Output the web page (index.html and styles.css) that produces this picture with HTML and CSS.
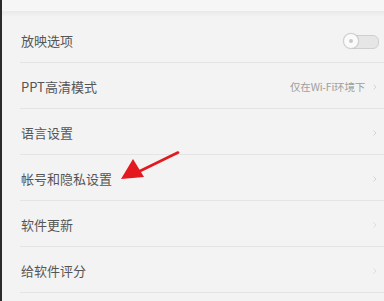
FILE: index.html
```html
<!DOCTYPE html>
<html lang="zh">
<head>
<meta charset="utf-8">
<link rel="stylesheet" href="styles.css">
</head>
<body>
<div class="screen">
  <div class="edge"></div>
  <div class="panel">
    <div class="top"></div>
    <div class="shadow"></div>
    <ul class="list">
      <li class="row">
        <span class="label">放映选项</span>
        <span class="toggle"><span class="knob"><span class="dot"></span></span></span>
      </li>
      <li class="row">
        <span class="label">PPT高清模式</span>
        <span class="value">仅在Wi-Fi环境下</span>
        <svg class="chev" width="4" height="6" viewBox="0 0 4 6"><path d="M0.5 0.5 L3 3 L0.5 5.5" fill="none" stroke="#d4d4d4" stroke-width="1"/></svg>
      </li>
      <li class="row">
        <span class="label">语言设置</span>
        <svg class="chev" width="4" height="6" viewBox="0 0 4 6"><path d="M0.5 0.5 L3 3 L0.5 5.5" fill="none" stroke="#d4d4d4" stroke-width="1"/></svg>
      </li>
      <li class="row">
        <span class="label">帐号和隐私设置</span>
        <svg class="chev" width="4" height="6" viewBox="0 0 4 6"><path d="M0.5 0.5 L3 3 L0.5 5.5" fill="none" stroke="#d4d4d4" stroke-width="1"/></svg>
      </li>
      <li class="row">
        <span class="label">软件更新</span>
        <svg class="chev" width="4" height="6" viewBox="0 0 4 6"><path d="M0.5 0.5 L3 3 L0.5 5.5" fill="none" stroke="#dcdcdc" stroke-width="1"/></svg>
      </li>
      <li class="row">
        <span class="label">给软件评分</span>
        <svg class="chev" width="4" height="6" viewBox="0 0 4 6"><path d="M0.5 0.5 L3 3 L0.5 5.5" fill="none" stroke="#dcdcdc" stroke-width="1"/></svg>
      </li>
    </ul>
  </div>
  <svg class="arrow" width="70" height="40" viewBox="0 0 70 40">
    <line x1="66" y1="1.5" x2="26" y2="21" stroke="#e3191f" stroke-width="2.6" stroke-linecap="round"/>
    <polygon points="9,28 21,8 32,26" fill="#e3191f"/>
  </svg>
</div>
</body>
</html>
```
FILE: styles.css
```css
* { box-sizing: border-box; }
html, body {
  margin: 0;
  padding: 0;
  background: #f3f3f3;
}
.screen {
  position: relative;
  width: 384px;
  height: 301px;
  overflow: hidden;
  display: flex;
  font-family: "Noto Sans CJK SC", "Noto Sans", sans-serif;
}
.edge {
  width: 2px;
  flex: none;
  background: #2b2b2b;
}
.panel {
  flex: 1;
  display: flex;
  flex-direction: column;
  background: #f3f3f3;
}
.top {
  height: 11px;
  background: #f6f6f6;
}
.shadow {
  height: 6px;
  background: linear-gradient(#e9e9e9, #f3f3f3);
}
.list {
  list-style: none;
  margin: 0;
  padding: 0 0 0 18px;
}
.row {
  height: 46px;
  display: flex;
  align-items: center;
  padding: 2px 7px 0 1px;
  border-bottom: 1px solid #e4e4e4;
}
.label {
  flex: 1;
  font-size: 13px;
  color: #555;
  line-height: 20px;
}
.value {
  font-size: 10.5px;
  color: #a0a0a0;
  margin-right: 8px;
  letter-spacing: -0.2px;
}
.chev { display: block; }
.toggle {
  position: relative;
  width: 36px;
  height: 16px;
  margin-right: -2px;
}
.toggle::before {
  content: "";
  position: absolute;
  left: 4px;
  right: 0;
  top: 2px;
  height: 12px;
  border-radius: 6px;
  background: #e6e6e6;
  border: 1px solid #cfcfcf;
}
.knob {
  position: absolute;
  left: 0;
  top: 0;
  width: 16px;
  height: 16px;
  border-radius: 50%;
  background: #fafafa;
  border: 1px solid #cfcfcf;
  box-shadow: 0 0 1px rgba(0,0,0,0.15);
  display: flex;
  align-items: center;
  justify-content: center;
}
.dot {
  width: 4px;
  height: 4px;
  border-radius: 50%;
  background: #c8c8c8;
}
.arrow {
  position: absolute;
  left: 112px;
  top: 151px;
}
```
